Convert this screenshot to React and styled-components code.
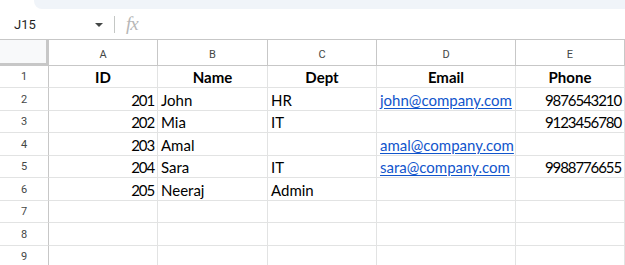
import React from 'react'
import styled, { createGlobalStyle } from 'styled-components'

const GlobalStyle = createGlobalStyle`
  html, body {
    margin: 0;
    padding: 0;
    background: #fff;
    overflow: hidden;
  }
  body {
    font-family: 'Liberation Sans', Arial, sans-serif;
  }
`

const color = {
  grid: '#e2e3e3',
  headerLine: '#c7c7c7',
  headerText: '#444746',
  text: '#000',
  link: '#1155cc',
  toolbar: '#f0f4f9',
}

const Page = styled.div`
  width: 625px;
  height: 265px;
  display: flex;
  flex-direction: column;
  overflow: hidden;
  & > * {
    flex-shrink: 0;
  }
`

const Toolbar = styled.div`
  height: 9px;
  margin-left: 34px;
  background: ${color.toolbar};
  border-bottom-left-radius: 8px;
`

const FormulaBar = styled.div`
  height: 31px;
  display: flex;
  align-items: center;
  padding-top: 1px;
  border-bottom: 1px solid ${color.headerLine};
  box-sizing: border-box;
`

const NameBox = styled.div`
  width: 86px;
  padding-left: 14px;
  display: flex;
  align-items: center;
  justify-content: space-between;
  font-family: Roboto, 'Liberation Sans', sans-serif;
  font-size: 13px;
  color: #1f1f1f;
`

const Caret = styled.span`
  width: 0;
  height: 0;
  border-left: 4px solid transparent;
  border-right: 4px solid transparent;
  border-top: 4px solid #444746;
  margin-right: -3px;
`

const Divider = styled.span`
  width: 1px;
  height: 17px;
  background: #c4c7c5;
  margin-left: 14px;
  margin-right: 11px;
`

const Fx = styled.span`
  font-family: 'Liberation Serif', serif;
  font-style: italic;
  font-size: 19px;
  color: #b7b7b7;
  letter-spacing: -1px;
  margin-top: -2px;
`

const Grid = styled.div`
  display: grid;
  grid-template-columns: 49px 109px 110px 109px 139px 109px;
  grid-template-rows: 25.5px repeat(9, 22.5px);
`

const Corner = styled.div`
  background: #f8f9fa;
  border-right: 3px solid #c7c7c7;
  border-bottom: 3px solid #c7c7c7;
  box-sizing: border-box;
`

const ColHead = styled.div`
  display: flex;
  align-items: center;
  justify-content: center;
  border-right: 1px solid ${color.headerLine};
  border-bottom: 1px solid ${color.headerLine};
  box-sizing: border-box;
  font-family: Roboto, 'Liberation Sans', sans-serif;
  font-size: 11px;
  color: ${color.headerText};
  padding-top: 4px;
`

const RowHead = styled.div`
  display: flex;
  align-items: center;
  justify-content: center;
  border-right: 1px solid ${color.headerLine};
  border-bottom: 1px solid ${color.grid};
  box-sizing: border-box;
  font-family: Roboto, 'Liberation Sans', sans-serif;
  font-size: 11px;
  color: ${color.headerText};
  padding-top: 1px;
`

const Cell = styled.div`
  display: flex;
  align-items: flex-end;
  justify-content: ${p => (p.$align === 'right' ? 'flex-end' : p.$align === 'center' ? 'center' : 'flex-start')};
  border-right: 1px solid ${color.grid};
  border-bottom: 1px solid ${color.grid};
  box-sizing: border-box;
  padding: 0 3px 0 3px;
  font-family: Lato, 'Liberation Sans', sans-serif;
  font-size: 15px;
  font-weight: ${p => (p.$bold ? 700 : 400)};
  letter-spacing: ${p => (p.$num ? '-1.1px' : 'normal')};
  color: ${color.text};
  white-space: nowrap;
  overflow: visible;
  line-height: 19px;
`

const Link = styled.a`
  color: ${color.link};
  text-decoration: underline;
  text-underline-offset: 2px;
`

const columns = ['A', 'B', 'C', 'D', 'E']

const rows = [
  { id: 'ID', name: 'Name', dept: 'Dept', email: 'Email', phone: 'Phone', head: true },
  { id: '201', name: 'John', dept: 'HR', email: 'john@company.com', phone: '9876543210' },
  { id: '202', name: 'Mia', dept: 'IT', email: '', phone: '9123456780' },
  { id: '203', name: 'Amal', dept: '', email: 'amal@company.com', phone: '' },
  { id: '204', name: 'Sara', dept: 'IT', email: 'sara@company.com', phone: '9988776655' },
  { id: '205', name: 'Neeraj', dept: 'Admin', email: '', phone: '' },
  {},
  {},
  {},
]

const App = () => (
  <Page>
    <GlobalStyle />
    <Toolbar />
    <FormulaBar>
      <NameBox>
        J15
        <Caret />
      </NameBox>
      <Divider />
      <Fx>fx</Fx>
    </FormulaBar>
    <Grid>
      <Corner />
      {columns.map(c => (
        <ColHead key={c}>{c}</ColHead>
      ))}
      {rows.map((r, i) => {
        const num = !r.head
        return (
          <React.Fragment key={i}>
            <RowHead>{i + 1}</RowHead>
            <Cell $align={r.head ? 'center' : 'right'} $bold={r.head} $num={num}>{r.id}</Cell>
            <Cell $align={r.head ? 'center' : 'left'} $bold={r.head}>{r.name}</Cell>
            <Cell $align={r.head ? 'center' : 'left'} $bold={r.head}>{r.dept}</Cell>
            <Cell $align={r.head ? 'center' : 'left'} $bold={r.head}>
              {r.head || !r.email ? r.email : <Link>{r.email}</Link>}
            </Cell>
            <Cell $align={r.head ? 'center' : 'right'} $bold={r.head} $num={num}>{r.phone}</Cell>
          </React.Fragment>
        )
      })}
    </Grid>
  </Page>
)

export default App
